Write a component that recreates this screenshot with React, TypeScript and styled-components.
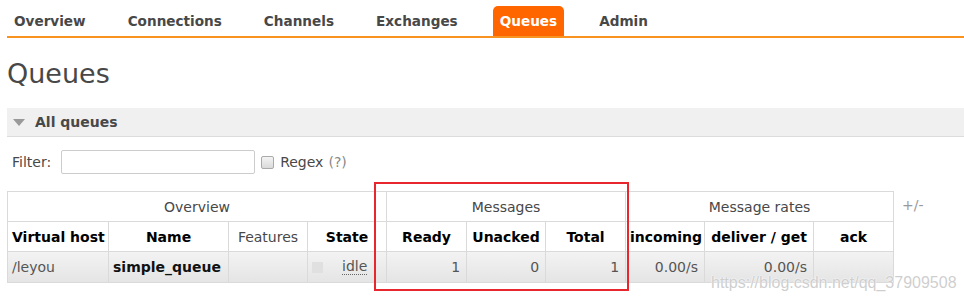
import React from 'react';
import styled, { createGlobalStyle } from 'styled-components';

const GlobalStyle = createGlobalStyle`
  body {
    margin: 0;
    font-family: 'DejaVu Sans', Verdana, sans-serif;
    font-size: 14px;
    color: #484848;
    background: #fff;
  }
`;

const Page = styled.div`
  position: relative;
  width: 964px;
  height: 302px;
  padding-left: 7px;
  box-sizing: border-box;
  overflow: hidden;
`;

const Menu = styled.ul`
  display: flex;
  gap: 28px;
  margin: 0;
  padding: 6px 0 0 0;
  list-style: none;
  border-bottom: 2px solid #f7931e;
`;

const MenuItem = styled.li<{ $active?: boolean }>`
  padding: 0 7px;
  height: 30px;
  line-height: 31px;
  font-size: 13.6px;
  font-weight: bold;
  color: ${(p) => (p.$active ? '#fff' : '#484848')};
  background: ${(p) => (p.$active ? '#ff6600' : 'transparent')};
  border-radius: 5px 5px 0 0;
`;

const Title = styled.h1`
  margin: 21px 0 0 0;
  height: 30px;
  line-height: 30px;
  font-size: 27px;
  font-weight: normal;
  color: #484848;
`;

const SectionBar = styled.div`
  display: flex;
  align-items: center;
  gap: 10px;
  margin-top: 19px;
  height: 28px;
  padding-left: 6px;
  background: #f0f0f0;
  border-bottom: 1px solid #dcdcdc;
  font-weight: bold;
`;

const Arrow = styled.span`
  width: 0;
  height: 0;
  border-left: 6px solid transparent;
  border-right: 6px solid transparent;
  border-top: 7px solid #999;
`;

const FilterRow = styled.div`
  display: flex;
  align-items: center;
  margin-top: 13px;
  padding-left: 5px;
  height: 24px;
`;

const FilterInput = styled.input`
  box-sizing: border-box;
  width: 194px;
  height: 24px;
  margin: 0 6px 0 10px;
  border: 1px solid #ccc;
  border-radius: 2px;
  font: inherit;
`;

const CheckBox = styled.span`
  width: 11px;
  height: 11px;
  border: 1px solid #aaa;
  border-radius: 2px;
  background: linear-gradient(#f4f4f4, #dadada);
  margin-right: 6px;
`;

const Help = styled.span`
  color: #888;
  margin-left: 5px;
`;

const TableRow = styled.div`
  display: flex;
  align-items: flex-start;
  gap: 8px;
  margin-top: 17px;
`;

const Table = styled.table`
  border-collapse: collapse;
  table-layout: fixed;
  width: 886px;
`;

const GroupHead = styled.th`
  height: 29px;
  padding: 0;
  border: 1px solid #dadada;
  font-weight: normal;
  color: #484848;
  text-align: center;
`;

const ColHead = styled.th<{ $plain?: boolean }>`
  height: 29px;
  padding: 0 4px;
  border: 1px solid #dadada;
  font-weight: ${(p) => (p.$plain ? 'normal' : 'bold')};
  color: ${(p) => (p.$plain ? '#484848' : '#000')};
  text-align: center;
  white-space: nowrap;
  overflow: hidden;
`;

const DataRow = styled.tr`
  background: linear-gradient(#f3f3f3, #e4e4e4);
`;

const Cell = styled.td<{ $align?: 'left' | 'right'; $strong?: boolean }>`
  height: 30px;
  padding: 0 6px 0 4px;
  border: 1px solid #dadada;
  text-align: ${(p) => p.$align ?? 'left'};
  font-weight: ${(p) => (p.$strong ? 'bold' : 'normal')};
  color: ${(p) => (p.$strong ? '#111' : '#555')};
  white-space: nowrap;
`;

const StateBox = styled.div`
  display: flex;
  align-items: center;
`;

const StateDot = styled.span`
  width: 11px;
  height: 11px;
  background: #e0e0e0;
  margin-right: 19px;
`;

const Abbr = styled.span`
  border-bottom: 1px dotted #666;
  line-height: 15px;
`;

const Toggle = styled.span`
  margin-top: 6px;
  color: #999;
`;

const Annotation = styled.div`
  position: absolute;
  left: 374px;
  top: 182px;
  width: 255px;
  height: 109px;
  box-sizing: border-box;
  border: 2px solid #e8262d;
  pointer-events: none;
`;

const Watermark = styled.div`
  position: absolute;
  left: 711px;
  top: 274px;
  font-family: 'Liberation Sans', Arial, sans-serif;
  font-size: 16px;
  color: rgba(190, 190, 190, 0.75);
  text-shadow: 0 0 1px #fff, 0 0 2px #fff;
  pointer-events: none;
  white-space: nowrap;
`;

const menu = ['Overview', 'Connections', 'Channels', 'Exchanges', 'Queues', 'Admin'];
const widths = [101, 120, 79, 79, 80, 79, 80, 79, 109, 80];

export default function App() {
  return (
    <Page>
      <GlobalStyle />
      <Menu>
        {menu.map((m) => (
          <MenuItem key={m} $active={m === 'Queues'}>
            {m}
          </MenuItem>
        ))}
      </Menu>
      <Title>Queues</Title>
      <SectionBar>
        <Arrow />
        All queues
      </SectionBar>
      <FilterRow>
        Filter:
        <FilterInput />
        <CheckBox />
        Regex
        <Help>(?)</Help>
      </FilterRow>
      <TableRow>
        <Table>
          <colgroup>
            {widths.map((w, i) => (
              <col key={i} style={{ width: w }} />
            ))}
          </colgroup>
          <thead>
            <tr>
              <GroupHead colSpan={4}>Overview</GroupHead>
              <GroupHead colSpan={3}>Messages</GroupHead>
              <GroupHead colSpan={3}>Message rates</GroupHead>
            </tr>
            <tr>
              <ColHead>Virtual host</ColHead>
              <ColHead>Name</ColHead>
              <ColHead $plain>Features</ColHead>
              <ColHead>State</ColHead>
              <ColHead>Ready</ColHead>
              <ColHead>Unacked</ColHead>
              <ColHead>Total</ColHead>
              <ColHead>incoming</ColHead>
              <ColHead>deliver / get</ColHead>
              <ColHead>ack</ColHead>
            </tr>
          </thead>
          <tbody>
            <DataRow>
              <Cell>/leyou</Cell>
              <Cell $strong>simple_queue</Cell>
              <Cell />
              <Cell>
                <StateBox>
                  <StateDot />
                  <Abbr>idle</Abbr>
                </StateBox>
              </Cell>
              <Cell $align="right">1</Cell>
              <Cell $align="right">0</Cell>
              <Cell $align="right">1</Cell>
              <Cell $align="right">0.00/s</Cell>
              <Cell $align="right">0.00/s</Cell>
              <Cell />
            </DataRow>
          </tbody>
        </Table>
        <Toggle>+/-</Toggle>
      </TableRow>
      <Annotation />
      <Watermark>https://blog.csdn.net/qq_37909508</Watermark>
    </Page>
  );
}
